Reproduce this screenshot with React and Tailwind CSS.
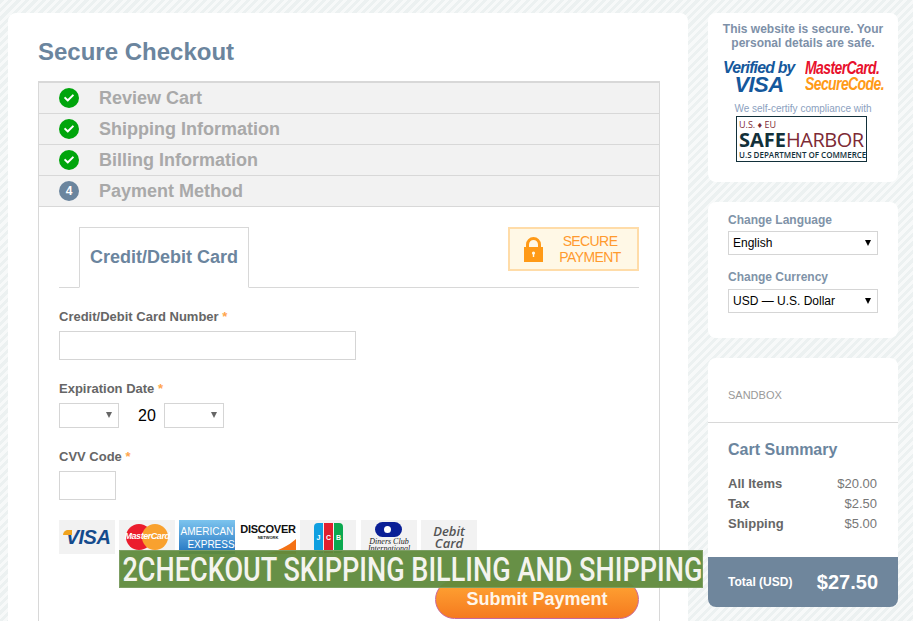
import { FaCheck } from "react-icons/fa";

const FONT = "font-['Liberation_Sans',Arial,sans-serif]";

function Step({ done, num, label }) {
  return (
    <div className="flex h-[31px] items-center border-b border-[#d8d8d8] bg-[#f2f2f2] pl-5">
      {done ? (
        <div className="grid h-5 w-5 place-items-center rounded-full bg-[#00a50c] text-white">
          <FaCheck className="h-[10px] w-[10px]" />
        </div>
      ) : (
        <div className="grid h-5 w-5 place-items-center rounded-full bg-[#6b859e] text-xs font-bold text-white">{num}</div>
      )}
      <span className="ml-5 text-lg font-bold text-[#a9a9a9]">{label}</span>
    </div>
  );
}

function FakeSelect({ className, value, dark }) {
  return (
    <div className={`relative flex items-center border border-[#d5d5d5] bg-white pl-1 text-xs text-black ${className}`}>
      {value}
      <span
        className={`absolute right-[6px] top-[8px] h-0 w-0 border-x-[3.5px] border-t-[6px] border-x-transparent ${
          dark ? "border-t-black" : "border-t-[#666]"
        }`}
      />
    </div>
  );
}

function CardTile({ children, className = "" }) {
  return <div className={`relative h-[34px] w-14 overflow-hidden bg-[#f2f2f2] ${className}`}>{children}</div>;
}

function CardLogos() {
  return (
    <div className="mt-5 flex gap-1">
      <CardTile>
        <div className="absolute inset-0 grid place-items-center pl-0.5 text-xl font-bold italic tracking-tight text-[#154b8c]">VISA</div>
        <div className="absolute left-1 top-[10px] h-[5px] w-[9px] rounded-tl-full bg-[#f0a31e]" />
      </CardTile>
      <CardTile>
        <div className="absolute left-[7px] top-1 h-[26px] w-[26px] rounded-full bg-[#eb1c2d]" />
        <div className="absolute left-[23px] top-1 h-[26px] w-[26px] rounded-full bg-[#f9a12e]" />
        <div className="absolute inset-0 grid place-items-center text-[9px] font-bold italic tracking-tighter text-white">MasterCard</div>
      </CardTile>
      <CardTile className="bg-gradient-to-b from-[#7cc4ee] to-[#1f74c0]">
        <div className="whitespace-nowrap pt-[5px] text-center text-[10px] leading-[13px] text-white">
          AMERICAN
          <div className="pl-2">EXPRESS</div>
        </div>
      </CardTile>
      <CardTile className="ml-px bg-white">
        <div className="pt-[3px] text-center text-[11px] font-bold leading-3 tracking-tight text-[#111]">DISCOVER</div>
        <div className="text-center text-[4px] font-bold leading-[5px] text-[#222]">NETWORK</div>
        <svg className="absolute bottom-0 left-0" width="56" height="15" viewBox="0 0 56 15">
          <path d="M26 15C38 12 48 7 56 0V15Z" fill="#f47216" />
        </svg>
      </CardTile>
      <CardTile>
        <div className="absolute left-[14px] top-[3px] flex h-[30px] gap-px">
          <div className="grid w-[9px] place-items-center rounded-l-sm bg-[#0f9fe0] text-[7px] font-bold text-white">J</div>
          <div className="grid w-[9px] place-items-center bg-[#e0202f] text-[7px] font-bold text-white">C</div>
          <div className="grid w-[9px] place-items-center rounded-r-sm bg-[#0aa84f] text-[7px] font-bold text-white">B</div>
        </div>
      </CardTile>
      <CardTile className="ml-px">
        <div className="absolute left-[14px] top-[2px] h-[15px] w-[27px] rounded-full bg-[#0a1f96]" />
        <div className="absolute left-[20px] top-[3px] h-[13px] w-[13px] rounded-full border-[3px] border-[#0a1f96] bg-white" />
        <div className="absolute inset-x-0 top-[18px] whitespace-nowrap text-center font-['Liberation_Serif',serif] text-[8px] italic leading-[7px] text-[#222]">
          Diners Club
          <br />
          International
        </div>
      </CardTile>
      <CardTile>
        <div className="pt-[5px] text-center font-['Open_Sans',sans-serif] text-[13px] font-semibold italic leading-[12px] text-[#555]">
          Debit
          <br />
          Card
        </div>
      </CardTile>
    </div>
  );
}

function LockIcon() {
  return (
    <svg width="19" height="25" viewBox="0 0 19 25" className="shrink-0">
      <path d="M3.5 11V7.5a6 6 0 0 1 12 0V11" fill="none" stroke="#ff9a17" strokeWidth="3" />
      <rect x="0" y="10" width="19" height="15" fill="#ff9a17" />
      <circle cx="9.5" cy="16" r="1.6" fill="#fff8e6" />
      <rect x="8.8" y="16" width="1.4" height="4" fill="#fff8e6" />
    </svg>
  );
}

function PaymentForm() {
  return (
    <div className="bg-white px-5 pb-8 pt-5">
      <div className="flex items-start justify-between border-b border-[#d8d8d8]">
        <div className="mb-[-1px] ml-5 grid h-[61px] w-[170px] place-items-center border border-b-white border-[#d8d8d8] bg-white pb-0.5 text-lg font-bold text-[#6b859e]">
          Credit/Debit Card
        </div>
        <div className="flex h-[44px] w-[131px] items-center border-2 border-[#ffdca8] bg-[#fff8e6] pl-[14px] text-sm leading-4 tracking-[-0.6px] text-[#ff9a2e]">
          <LockIcon />
          <div className="ml-3 flex-1 pr-3 text-center">
            SECURE
            <br />
            PAYMENT
          </div>
        </div>
      </div>

      <label className="mt-[21px] block text-[13px] font-bold leading-[16px] text-[#666]">
        Credit/Debit Card Number <span className="text-[#ffa54c]">*</span>
      </label>
      <input className="mt-[6px] block h-[29px] w-[297px] border border-[#d5d5d5] bg-white" />

      <label className="mt-[21px] block text-[13px] font-bold leading-[16px] text-[#666]">
        Expiration Date <span className="text-[#ffa54c]">*</span>
      </label>
      <div className="mt-[6px] flex h-[25px] items-center">
        <FakeSelect className="h-[25px] w-[60px]" />
        <span className="ml-[19px] w-[26px] text-base text-black">20</span>
        <FakeSelect className="h-[25px] w-[60px]" />
      </div>

      <label className="mt-[21px] block text-[13px] font-bold leading-[16px] text-[#666]">
        CVV Code <span className="text-[#ffa54c]">*</span>
      </label>
      <input className="mt-[6px] block h-[29px] w-[57px] border border-[#d5d5d5] bg-white" />

      <CardLogos />

      <div className="mt-[26px] flex justify-end">
        <button className="h-[39px] w-[204px] rounded-full border border-[#c8689a] bg-gradient-to-b from-[#ffa534] to-[#f57a1f] pb-0.5 text-lg font-bold text-[#fff6ea]">
          Submit Payment
        </button>
      </div>
    </div>
  );
}

function SecureCard() {
  return (
    <section className="h-[169px] rounded-lg bg-white pt-[9px] text-center">
      <p className="text-xs font-bold leading-[14px] text-[#7d90a8]">
        This website is secure. Your
        <br />
        personal details are safe.
      </p>
      <div className="ml-[15px] mt-[10px] flex h-[36px] gap-[10px] text-left font-bold italic">
        <div className="w-[72px] text-center leading-none text-[#15589c]">
          <div className="origin-left scale-x-[0.93] whitespace-nowrap text-left text-[17px] leading-[16px] tracking-tighter">Verified by</div>
          <div className="text-[22px] leading-[18px] tracking-tight">VISA</div>
        </div>
        <div className="w-[77px] leading-none tracking-tighter">
          <div className="origin-left scale-x-[0.78] whitespace-nowrap text-[18px] leading-[16px] text-[#e8112d]">MasterCard.</div>
          <div className="origin-left scale-x-[0.78] whitespace-nowrap text-[18px] leading-[16px] text-[#ff9a17]">SecureCode.</div>
        </div>
      </div>
      <p className="mt-[6px] text-[10px] leading-[13px] text-[#8c9fc0]">We self-certify compliance with</p>
      <div className="ml-7 mt-px h-[46px] w-[131px] whitespace-nowrap border border-[#12303a] pl-[2px] pt-[2px] text-left font-['Open_Sans',sans-serif]">
        <div className="text-[9px] leading-[11px] text-[#7d2a35]">U.S. ♦ EU</div>
        <div className="text-[20px] leading-[19px] text-[#7d2a35]">
          <span className="font-bold text-[#12303a]">SAFE</span>
          <span className="tracking-tight">HARBOR</span>
        </div>
        <div className="text-[8px] font-semibold leading-[11px] text-[#12303a]">U.S DEPARTMENT OF COMMERCE</div>
      </div>
    </section>
  );
}

function LocaleCard() {
  return (
    <section className="mt-5 h-[136px] rounded-lg bg-white px-5 pt-[11px] text-xs font-bold text-[#8093a8]">
      <p className="leading-[14px]">Change Language</p>
      <FakeSelect className="mt-[4px] h-6 w-[150px] font-normal" value="English" dark />
      <p className="mt-[15px] leading-[14px]">Change Currency</p>
      <FakeSelect className="mt-[5px] h-6 w-[150px] font-normal" value="USD — U.S. Dollar" dark />
    </section>
  );
}

function SummaryRow({ label, price }) {
  return (
    <div className="flex h-5 items-center justify-between pr-px text-[13px] leading-5">
      <span className="font-bold text-[#666]">{label}</span>
      <span className="text-[#777]">{price}</span>
    </div>
  );
}

function CartCard() {
  return (
    <section className="mt-5 h-[249px] rounded-lg bg-white">
      <div className="h-[65px] border-b border-[#d8d8d8] px-5 pt-[31px] text-[11px] leading-[13px] text-[#999]">SANDBOX</div>
      <div className="h-[134px] px-5 pt-[17px]">
        <h2 className="text-base font-bold leading-5 text-[#6b859e]">Cart Summary</h2>
        <div className="mt-[14px]">
          <SummaryRow label="All Items" price="$20.00" />
          <SummaryRow label="Tax" price="$2.50" />
          <SummaryRow label="Shipping" price="$5.00" />
        </div>
      </div>
      <div className="flex h-[50px] items-center justify-between rounded-b-lg bg-[#6f869c] pl-5 pr-5 font-bold text-white">
        <span className="text-xs">Total (USD)</span>
        <span className="text-xl">$27.50</span>
      </div>
    </section>
  );
}

export default function App() {
  return (
    <div
      className={`relative h-[621px] overflow-hidden bg-[repeating-linear-gradient(135deg,#ecf1f1_0px,#ecf1f1_3px,#f7f9f9_3px,#f7f9f9_6px)] ${FONT}`}
    >
      <div className="flex items-start gap-5 pl-2 pt-[13px]">
        <main className="h-[640px] w-[680px] rounded-lg bg-white pl-[30px] pr-7">
          <h1 className="pt-[25px] text-2xl font-bold leading-7 text-[#6b859e]">Secure Checkout</h1>
          <div className="mt-[15px] border-x border-t-2 border-[#d8d8d8]">
            <Step done label="Review Cart" />
            <Step done label="Shipping Information" />
            <Step done label="Billing Information" />
            <Step num="4" label="Payment Method" />
            <PaymentForm />
          </div>
        </main>
        <aside className="w-[190px]">
          <SecureCard />
          <LocaleCard />
          <CartCard />
        </aside>
      </div>

      {/* video caption over the page */}
      <div className="absolute left-[119px] top-[550px] h-[38px] w-[584px] border border-[#7d9e63] bg-[#5f8a3c]/95">
        <div className="w-max origin-left scale-x-[0.797] whitespace-nowrap pl-[3px] font-['Roboto',sans-serif] text-[34px] font-medium leading-[36px] text-[#f4f4ee]">
          2CHECKOUT SKIPPING BILLING AND SHIPPING
        </div>
      </div>
    </div>
  );
}
